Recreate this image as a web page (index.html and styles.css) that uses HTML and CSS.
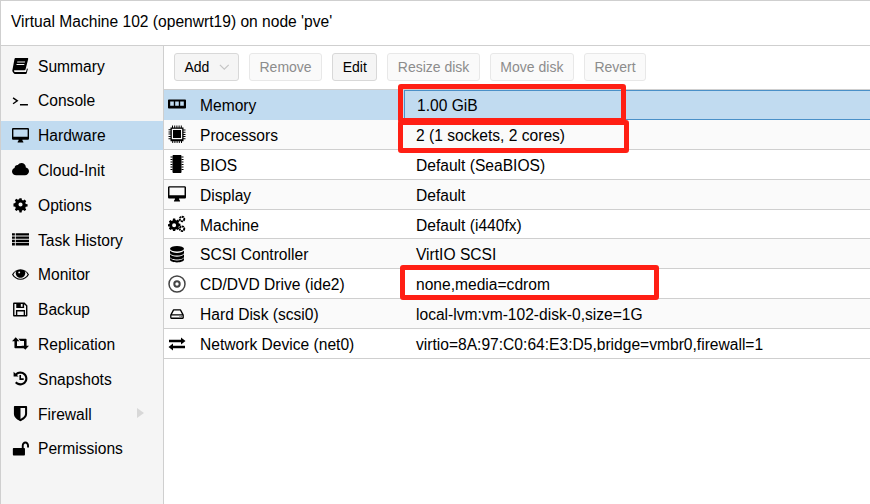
FILE: index.html
```html
<!DOCTYPE html>
<html lang="en">
<head>
<meta charset="utf-8">
<title>Virtual Machine 102</title>
<link rel="stylesheet" href="styles.css">
</head>
<body>
<svg class="defs" width="0" height="0" aria-hidden="true">
  <symbol id="i-desktop" viewBox="0 0 16 16"><path fill-rule="evenodd" d="M1.2 1h13.6c.7 0 1.2.5 1.2 1.2v8.6c0 .7-.5 1.2-1.2 1.2H9.8c0 .9.4 1.3.9 2v.6H5.300v-.6c.5-.7.9-1.100.9-2H1.200C.5 12 0 11.500 0 10.800V2.200C0 1.500.5 1 1.200 1zM1.300 2.300v6.900h13.400V2.300z"/></symbol>
</svg>
<div class="app">
  <header class="title">Virtual Machine 102 (openwrt19) on node 'pve'</header>
  <div class="body">
    <nav class="side">
      <div class="nav"><svg class="ic" viewBox="0 0 16 16"><path d="M3.500 1h11c.6 0 .9.500.7 1.100l-2.400 9.400c-.2.800-.8 1-1.400 1H2.600c-.5 0-.9.400-.7.900.1.400.5.600 1 .6h10.300l.9-3.300.8.500-1 3.900c-.1.500-.5.900-1.100.9H2.500C1.300 15 .3 14.200.3 12.800c0-.4.100-.8.200-1.100L2.300 2.200C2.400 1.500 2.900 1 3.500 1zM5 4.200l-.2 1h7.300l.3-1zM4.400 6.500l-.3 1h7.400l.2-1z" fill-rule="evenodd"/></svg><span>Summary</span></div>
      <div class="nav"><svg class="ic" viewBox="0 0 16 16" fill="none" stroke="#000" stroke-width="1.300"><path d="M1 5.500l4 2.800-4 2.800M7.500 12h7.500"/></svg><span>Console</span></div>
      <div class="nav sel"><svg class="ic"><use href="#i-desktop"/></svg><span>Hardware</span></div>
      <div class="nav"><svg class="ic" viewBox="0 0 16 16"><path d="M4 13.500c-2.200 0-4-1.500-4-3.600 0-1.600 1-2.900 2.400-3.400C2.500 4.800 3.900 3.500 5.500 3.700 6.300 2.500 7.500 1.800 8.900 1.800c2.300 0 4.100 1.700 4.100 3.900v.5c1.800.3 3 1.700 3 3.500 0 2.100-1.700 3.800-3.800 3.800z"/></svg><span>Cloud-Init</span></div>
      <div class="nav"><svg class="ic" viewBox="0 0 16 16"><path fill-rule="evenodd" d="M6.800 1h2.400l.4 2 1.400.6 1.700-1.100 1.700 1.700-1.100 1.700.6 1.400 2 .4v2.400l-2 .4-.6 1.400 1.100 1.700-1.700 1.700-1.700-1.100-1.400.6-.4 2H6.800l-.4-2-1.400-.6-1.700 1.100-1.700-1.700 1.100-1.700-.6-1.400-2-.4V6.800l2-.4.6-1.400-1.100-1.700 1.700-1.700 1.700 1.100 1.400-.6zM8 5.700a2.300 2.300 0 1 0 0 4.600 2.300 2.300 0 0 0 0-4.600z" transform="translate(1.300 1.300) scale(.84)"/></svg><span>Options</span></div>
      <div class="nav"><svg class="ic" viewBox="0 0 16 16"><path d="M0 2h2.700v2.300H0zM3.500 2H16v2.300H3.500zM0 5.100h2.700v2.300H0zM3.500 5.100H16v2.300H3.500zM0 8.200h2.700v2.300H0zM3.500 8.200H16v2.300H3.500zM0 11.300h2.700v2.300H0zM3.500 11.300H16v2.300H3.500z"/></svg><span>Task History</span></div>
      <div class="nav"><svg class="ic" viewBox="0 0 16 16"><path d="M8 3c3.500 0 6.400 2 8 5-1.600 3-4.500 5-8 5s-6.400-2-8-5c1.600-3 4.500-5 8-5z"/><path fill="#f5f5f5" d="M4 4.600C2.900 5.500 1.900 6.600 1.300 8c1.200 2.500 3.900 4 6.700 4s5.500-1.500 6.700-4c-.6-1.400-1.600-2.500-2.700-3.400.3.600.5 1.300.5 2 0 2.500-2 4.500-4.500 4.500S3.500 9.100 3.500 6.600c0-.7.200-1.400.5-2z"/><circle cx="8" cy="7.300" r="3"/><circle cx="6.800" cy="6" r=".9" fill="#f5f5f5"/></svg><span>Monitor</span></div>
      <div class="nav"><svg class="ic" viewBox="0 0 16 16"><path fill-rule="evenodd" d="M1.800 1.500h10l2.700 2.700v9.500c0 .5-.4.800-.8.800H1.800c-.5 0-.8-.3-.8-.8V2.300c0-.5.300-.8.800-.8zM2.300 2.800v10.400h1.400V8.500h8.600v4.700h.9V4.800l-1.800-1.800v3.500H4V2.800zM8.300 2.800v2.500h1.700V2.800zM5 9.800v3.400h6V9.800z"/></svg><span>Backup</span></div>
      <div class="nav"><svg class="ic" viewBox="0 0 16 16"><path d="M3.500 2L7 5.800H4.700V10.300H10L12 12.500H3C2.600 12.500 2.300 12.200 2.300 11.800V5.800H0z"/><path d="M6 3.500H13C13.400 3.500 13.700 3.800 13.700 4.200V10H16L12.500 13.800 9 10H11.300V5.700H8z"/></svg><span>Replication</span></div>
      <div class="nav"><svg class="ic" viewBox="0 0 16 16"><path d="M7.800 1.500c3.700 0 6.700 2.900 6.700 6.500s-3 6.500-6.700 6.500c-1.900 0-3.700-.8-5-2.200l1.500-1.400c.9 1 2.200 1.600 3.500 1.600 2.600 0 4.700-2 4.700-4.500s-2.100-4.500-4.700-4.500c-1.200 0-2.300.4-3.100 1.200l1.400 1.400H1.500V1.700l1.700 1.700c1.200-1.200 2.800-1.900 4.600-1.900z"/><path d="M7 4.800h1.500v3h2.500v1.500H7z"/></svg><span>Snapshots</span></div>
      <div class="nav"><svg class="ic" viewBox="0 0 16 16"><path fill-rule="evenodd" d="M2.500 1h11c.4 0 .7.300.7.700v6.800c0 3.400-3.700 5.700-6.200 6.800-2.500-1.100-6.200-3.400-6.200-6.800V1.700c0-.4.300-.7.700-.7zM8 2.900v10.300c1.800-.9 4.300-2.700 4.300-4.700V2.900z"/></svg><span>Firewall</span><i class="caret"></i></div>
      <div class="nav"><svg class="ic" viewBox="0 0 16 16"><path fill-rule="evenodd" d="M1.700 7.500h7.500V5.300c0-2.200 1.500-3.800 3.400-3.800S16 3.100 16 5.300v1.700h-1.800V5.300c0-1.200-.7-2.100-1.600-2.100s-1.600.9-1.600 2.100v2.200h.3c.5 0 .9.400.9.900v5.200c0 .5-.4.900-.9.900H1.700c-.5 0-.9-.4-.9-.9V8.400c0-.5.400-.9.900-.9z"/></svg><span>Permissions</span></div>
    </nav>
    <main class="main">
      <div class="toolbar">
        <button class="btn on add">Add<svg class="chev" viewBox="0 0 12 8" fill="none" stroke="#c4c4c4" stroke-width="1.300"><path d="M1 1.500l5 5 5-5"/></svg></button>
        <button class="btn off">Remove</button>
        <button class="btn on">Edit</button>
        <button class="btn off">Resize disk</button>
        <button class="btn off">Move disk</button>
        <button class="btn off">Revert</button>
      </div>
      <div class="grid">
        <div class="row sel">
          <div class="key"><svg class="ric" viewBox="0 0 18 16"><path fill-rule="evenodd" d="M.8 3.500h16.400c.4 0 .8.400.8.800v7.400c0 .4-.4.800-.8.800H.8c-.4 0-.8-.4-.8-.8V4.300c0-.4.400-.8.800-.8zM2.200 5.500v4.300h3.600V5.500zM7.200 5.500v4.300h3.600V5.500zM12.200 5.500v4.300h3.600V5.500z"/></svg><span>Memory</span></div>
          <div class="val focus">1.00 GiB</div>
        </div>
        <div class="row">
          <div class="key"><svg class="ric" viewBox="0 0 18 18"><path d="M4 .5h1v2h1.200v-2h1v2h1.200v-2h1v2h1.200v-2h1v2h1.200v-2h1v2H15.500v2h2v1h-2v1.200h2v1h-2v1.200h2v1h-2v1.200h2v1h-2v1.200h2v1h-2v2H14v2h-1v-2h-1.200v2h-1v-2H9.600v2h-1v-2H7.400v2h-1v-2H5.200v2h-1v-2H2.500v-2h-2v-1h2v-1.200h-2v-1h2V9.600h-2v-1h2V7.400h-2v-1h2V5.200h-2v-1h2v-1.700H4z"/><path fill="#fafafa" d="M3.800 3.800h10.400v10.400H3.800z"/><path d="M5 5h8v8H5z"/></svg><span>Processors</span></div>
          <div class="val">2 (1 sockets, 2 cores)</div>
        </div>
        <div class="row">
          <div class="key"><svg class="ric" viewBox="0 0 18 18"><path d="M5.500 0h7c.5 0 1 .5 1 1v16c0 .5-.5 1-1 1h-7c-.5 0-1-.5-1-1V1c0-.5.5-1 1-1z"/><path stroke="#000" stroke-width="1.100" d="M2.500 2h2M2.500 4.500h2M2.500 7h2M2.500 9.500h2M2.500 12h2M2.500 14.500h2M13.500 2h2M13.500 4.500h2M13.500 7h2M13.500 9.500h2M13.500 12h2M13.500 14.500h2"/></svg><span>BIOS</span></div>
          <div class="val">Default (SeaBIOS)</div>
        </div>
        <div class="row">
          <div class="key"><svg class="ric"><use href="#i-desktop"/></svg><span>Display</span></div>
          <div class="val">Default</div>
        </div>
        <div class="row">
          <div class="key"><svg class="ric" viewBox="0 0 18 18"><path fill-rule="evenodd" d="M5 4.500h2.200l.3 1.500 1 .4 1.300-.8 1.500 1.500-.8 1.300.4 1 1.500.3v2.200l-1.500.3-.4 1 .8 1.300-1.500 1.500-1.300-.8-1 .4-.3 1.500H5l-.3-1.500-1-.4-1.300.8-1.500-1.500.8-1.300-.4-1L0 12.400v-2.200l1.300-.3.400-1-.8-1.300 1.500-1.500 1.300.8 1-.4zM6.100 9.300a2 2 0 1 0 0 4 2 2 0 0 0 0-4z" transform="translate(0 -1)"/><circle cx="14" cy="4" r="2.300" fill="none" stroke="#000" stroke-width="1.900" stroke-dasharray="1.900 .5"/><circle cx="14" cy="13.700" r="2.300" fill="none" stroke="#000" stroke-width="1.900" stroke-dasharray="1.900 .5"/></svg><span>Machine</span></div>
          <div class="val">Default (i440fx)</div>
        </div>
        <div class="row">
          <div class="key"><svg class="ric" viewBox="0 0 18 18"><ellipse cx="9" cy="3.800" rx="7" ry="2.800"/><path d="M2 5.600c1 1.700 4 2.400 7 2.400s6-.7 7-2.400v2.200C16 9.600 12.800 10.600 9 10.600S2 9.600 2 7.800zM2 9.300c1 1.700 4 2.400 7 2.400s6-.7 7-2.400v2.400c0 1.800-3.200 2.800-7 2.800s-7-1-7-2.800zM2 13c1 1.700 4 2.400 7 2.400s6-.7 7-2.400v1.500c0 1.800-3.200 2.900-7 2.900s-7-1.100-7-2.900z"/></svg><span>SCSI Controller</span></div>
          <div class="val">VirtIO SCSI</div>
        </div>
        <div class="row">
          <div class="key"><svg class="ric" viewBox="0 0 18 18" fill="none" stroke="#444"><circle cx="9" cy="9" r="8" stroke-width="1.500"/><circle cx="9" cy="9" r="2.700" stroke-width="2"/></svg><span>CD/DVD Drive (ide2)</span></div>
          <div class="val">none,media=cdrom</div>
        </div>
        <div class="row">
          <div class="key"><svg class="ric" viewBox="-1.500 -1.500 21 21"><path fill-rule="evenodd" d="M5 3.500h8c.5 0 .8.200 1 .7l2.800 5.300c.1.300.2.600.2.900v3.100c0 .8-.6 1.400-1.400 1.400H2.400C1.600 14.500 1 13.900 1 13.100V10.400c0-.3.100-.6.200-.9L4 4.200c.2-.5.500-.7 1-.7zM5.500 4.800L3.200 9.300h11.600l-2.300-4.500zM2.500 10.700v2.400h13v-2.400zM12 11.300h1v1h-1zM14 11.300h1v1h-1z"/></svg><span>Hard Disk (scsi0)</span></div>
          <div class="val">local-lvm:vm-102-disk-0,size=1G</div>
        </div>
        <div class="row">
          <div class="key"><svg class="ric" viewBox="0 0 18 18"><path d="M13 2.500l4.500 3.500L13 9.500V7.200H1V4.800h12zM5 8.500v2.300h12v2.400H5v2.300L.5 12z"/></svg><span>Network Device (net0)</span></div>
          <div class="val">virtio=8A:97:C0:64:E3:D5,bridge=vmbr0,firewall=1</div>
        </div>
      </div>
    </main>
  </div>
</div>
<div class="mark m1"></div>
<div class="mark m2"></div>
<div class="mark m3"></div>
</body>
</html>
```
FILE: styles.css
```css
* { box-sizing: border-box; }
html, body { margin: 0; padding: 0; height: 100%; }
body {
  position: relative;
  width: 870px;
  height: 504px;
  overflow: hidden;
  background: #fff;
  color: #000;
  font-family: "Liberation Sans", Arial, sans-serif;
  font-size: 15.6px;
}
.defs { position: absolute; }
.app {
  display: flex;
  flex-direction: column;
  height: 504px;
  border-top: 1px solid #cfcfcf;
  border-left: 1px solid #cfcfcf;
}
.title {
  height: 45px;
  flex: none;
  display: flex;
  align-items: center;
  padding: 0 0 2px 10px;
  border-bottom: 1px solid #cfcfcf;
  background: #fff;
}
.body { flex: 1; display: flex; min-height: 0; }
.side {
  width: 163px;
  flex: none;
  background: #f5f5f5;
  border-right: 1px solid #cfcfcf;
  padding-top: 5.100px;
  display: flex;
  flex-direction: column;
  gap: 5.800px;
}
.nav {
  height: 29px;
  flex: none;
  display: flex;
  align-items: center;
  padding-left: 11px;
  position: relative;
}
.nav.sel { background: #c1dbf0; }
.nav span { margin-left: 9px; padding-top: 2px; }
.ic { width: 17px; height: 17px; flex: none; }
.caret {
  position: absolute;
  left: 136px;
  top: 9px;
  border-left: 7px solid #d8d8d8;
  border-top: 5.500px solid transparent;
  border-bottom: 5.500px solid transparent;
}
.main { flex: 1; min-width: 0; display: flex; flex-direction: column; }
.toolbar {
  height: 43px;
  flex: none;
  display: flex;
  align-items: flex-start;
  gap: 10px;
  padding: 7px 0 0 10px;
  background: #fff;
}
.btn {
  height: 28px;
  padding: 0 9.500px;
  border-radius: 3px;
  font: inherit;
  font-size: 14px;
  border: 1px solid #d8d8d8;
  background: #f5f5f5;
  color: #000;
}
.btn.off { color: #8c8c8c; background: #fafafa; border-color: #e8e8e8; }
.add { display: flex; align-items: center; padding-right: 8px; width: 65px; }
.chev { width: 12px; height: 8px; margin-left: 10px; }
.grid { border-top: 1px solid #cfcfcf; }
.row {
  display: flex;
  height: 29.9px;
  border-bottom: 1px solid #cfcfcf;
  background: #fff;
  align-items: stretch;
}
.row:nth-child(even) { background: #fafafa; }
.row.sel { background: #c1dbf0; border-bottom-color: #c1dbf0; }
.key {
  width: 240px;
  flex: none;
  display: flex;
  align-items: center;
  padding-left: 4px;
}
.key span { margin-left: 14px; padding-top: 3px; }
.ric { width: 18px; height: 18px; flex: none; margin-top: 0; }
.val {
  flex: 1;
  display: flex;
  align-items: center;
  padding-left: 12px;
  padding-top: 3px;
}
.val.focus { border: 1px solid #4a90c8; border-right: 0; height: 29.9px; }
.mark {
  position: absolute;
  border: 5px solid #ff1f14;
  border-radius: 3px;
}
.m1 { left: 398px; top: 84px; width: 228px; height: 39px; }
.m2 { left: 398px; top: 120px; width: 231px; height: 33px; }
.m3 { left: 400px; top: 265px; width: 259px; height: 35px; }
```
